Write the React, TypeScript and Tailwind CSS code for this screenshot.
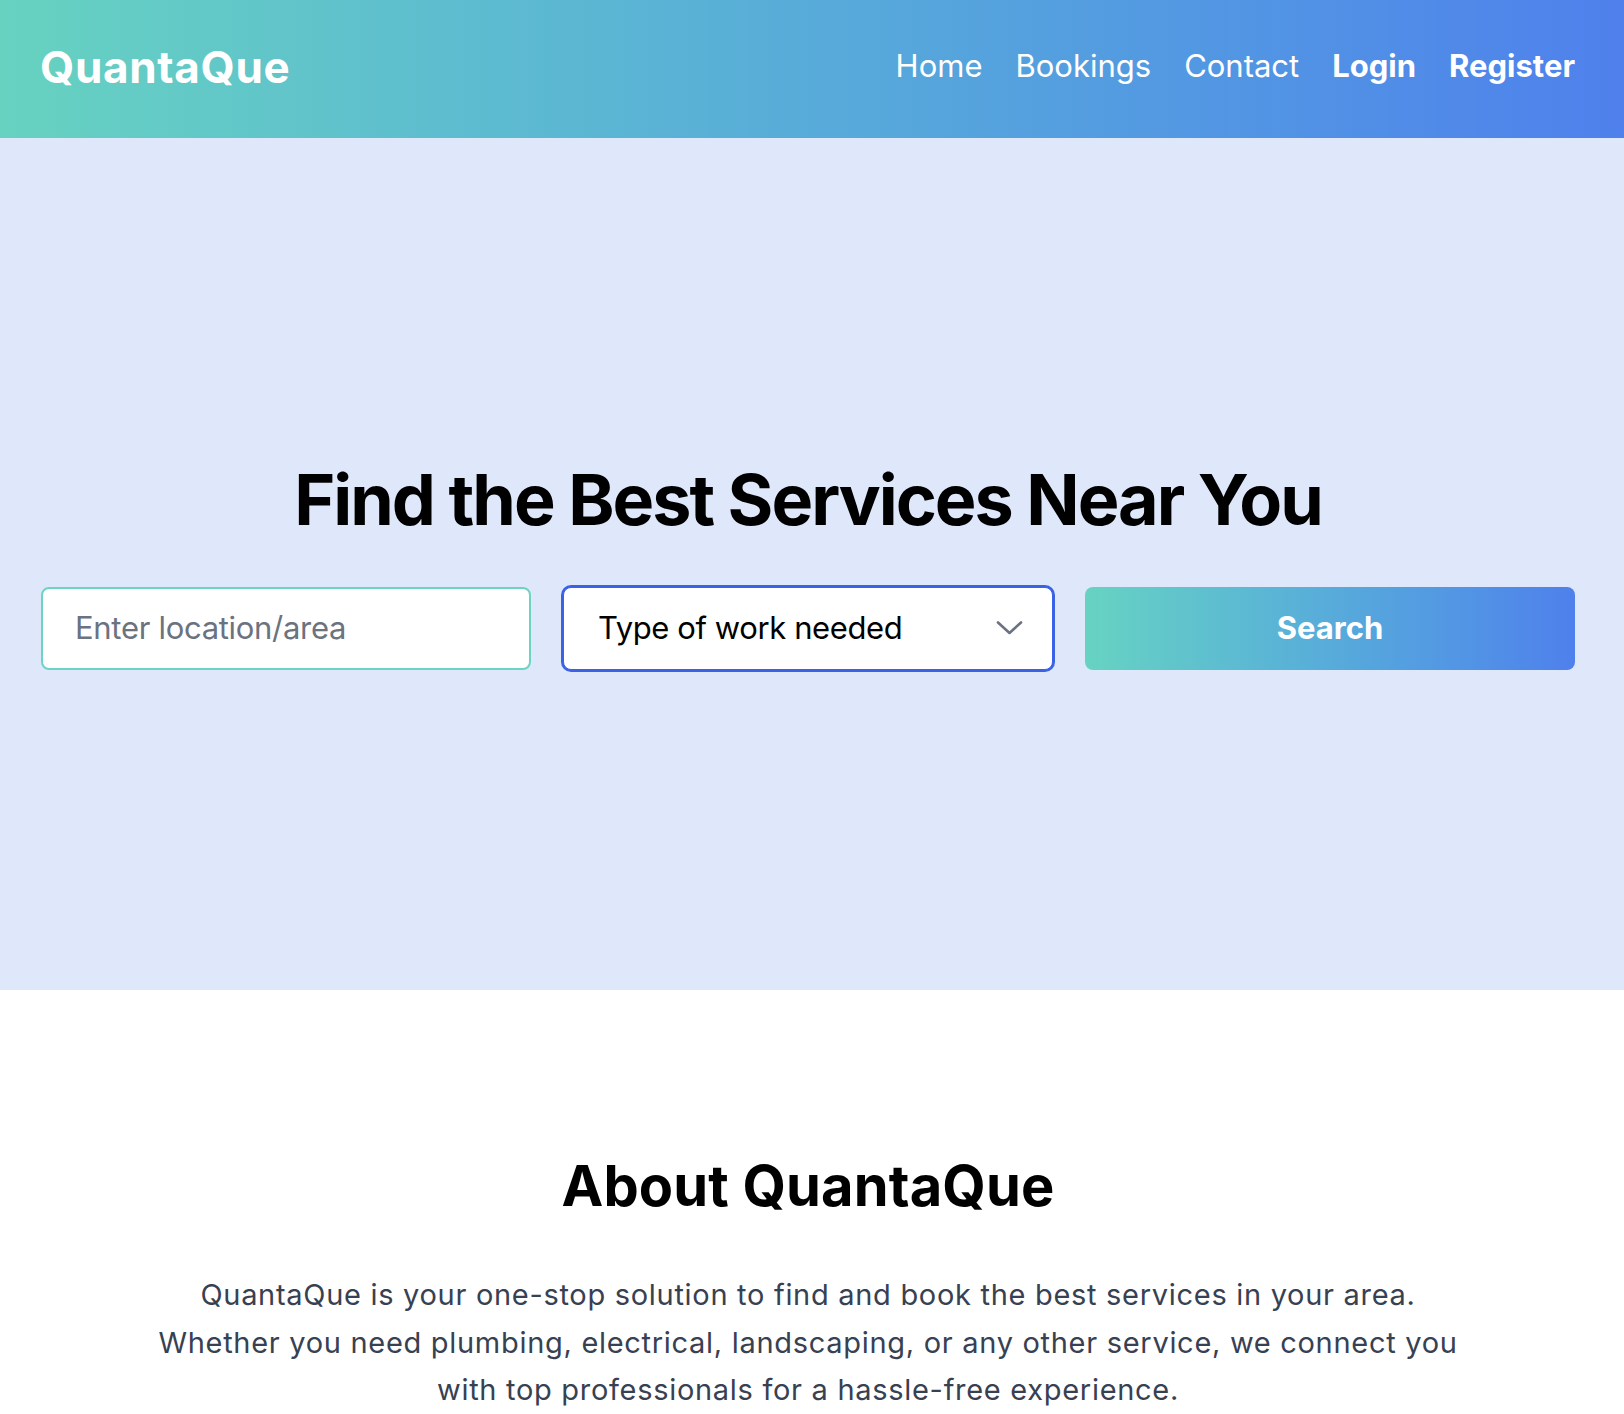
import React from "react";

export default function App() {
  return (
    <div className="min-h-screen bg-white font-['Inter','Noto_Sans',sans-serif] text-black">
      {/* Header */}
      <header className="h-[138px] bg-gradient-to-r from-[#67d2c0] to-[#4f80ec]">
        <div className="flex h-full items-center justify-between pb-[5px] pl-[40px] pr-[49px]">
          <div className="text-[44px] font-bold tracking-[0.7px] text-white">QuantaQue</div>
          <nav className="flex items-center gap-[33px] text-[31px] text-white">
            <a className="font-normal">Home</a>
            <a className="font-normal">Bookings</a>
            <a className="font-normal">Contact</a>
            <a className="font-bold">Login</a>
            <a className="font-bold">Register</a>
          </nav>
        </div>
      </header>

      {/* Hero */}
      <section className="flex h-[852px] items-center bg-[#dfe8fa] pt-[6px]">
        <div className="ml-[41px] mr-[49px] flex flex-1 flex-col items-center">
          <h1 className="mb-[52px] text-[70px] font-bold leading-none tracking-[-2px]">
            Find the Best Services Near You
          </h1>
          <div className="grid w-full grid-cols-3 gap-[32px]">
            <div className="flex h-[83px] items-center rounded-lg border-2 border-[#6dd3c5] bg-white pl-[32px]">
              <span className="text-[31px] tracking-[-0.3px] text-[#6b7280]">Enter location/area</span>
            </div>
            <div className="flex h-[83px] items-center justify-between rounded-lg border border-[#3b62e5] bg-white pl-[34px] pr-[29px] ring-2 ring-[#3b62e5]">
              <span className="text-[31px] tracking-[-0.4px] text-black">Type of work needed</span>
              <svg width="27" height="16" viewBox="0 0 27 16" fill="none">
                <path d="M2 2.5 L13.5 13 L25 2.5" stroke="#6b7280" strokeWidth="2.6" strokeLinecap="round" strokeLinejoin="round" />
              </svg>
            </div>
            <button className="flex h-[83px] items-center justify-center rounded-lg bg-gradient-to-r from-[#67d3c2] to-[#4f80ec] text-[31px] font-bold text-white">
              Search
            </button>
          </div>
        </div>
      </section>

      {/* About */}
      <section className="bg-white pt-[163px]">
        <div className="ml-[41px] mr-[49px] flex flex-col items-center">
          <h2 className="mb-[51px] text-[56px] font-bold leading-[1.2] tracking-[0.15px]">About QuantaQue</h2>
          <p className="max-w-[1330px] text-center text-[29px] leading-[47.5px] tracking-[0.7px] text-[#374151]">
            QuantaQue is your one-stop solution to find and book the best services in your area. Whether you need plumbing, electrical, landscaping, or any other service, we connect you with top professionals for a hassle-free experience.
          </p>
        </div>
      </section>
    </div>
  );
}
